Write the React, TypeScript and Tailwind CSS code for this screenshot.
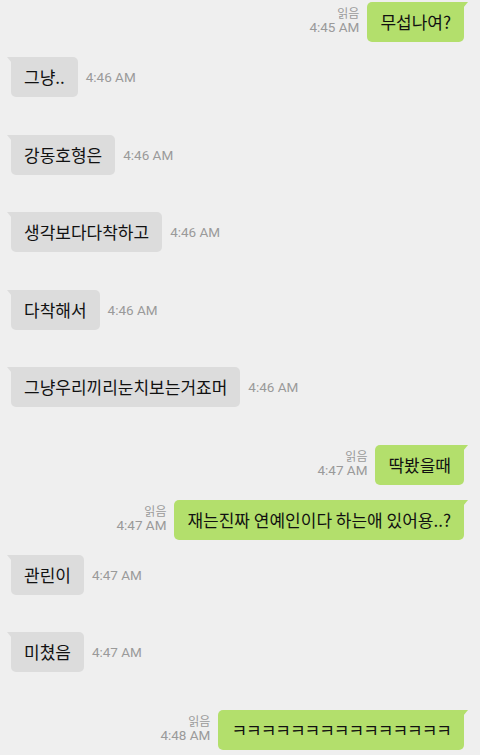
const font = { fontFamily: '"Noto Sans CJK KR", "Noto Sans", sans-serif' };

type Msg = {
  side: "in" | "out";
  text: string;
  time: string;
  gap: string;
  tight?: boolean;
};

const messages: Msg[] = [
  { side: "out", text: "무섭나여?", time: "4:45 AM", gap: "mt-[2px]" },
  { side: "in", text: "그냥..", time: "4:46 AM", gap: "mt-[15px]" },
  { side: "in", text: "강동호형은", time: "4:46 AM", gap: "mt-[38px]" },
  { side: "in", text: "생각보다다착하고", time: "4:46 AM", gap: "mt-[37px]" },
  { side: "in", text: "다착해서", time: "4:46 AM", gap: "mt-[38px]" },
  { side: "in", text: "그냥우리끼리눈치보는거죠머", time: "4:46 AM", gap: "mt-[37px]" },
  { side: "out", text: "딱봤을때", time: "4:47 AM", gap: "mt-[38px]" },
  { side: "out", text: "재는진짜 연예인이다 하는애 있어용..?", time: "4:47 AM", gap: "mt-[15px]" },
  { side: "in", text: "관린이", time: "4:47 AM", gap: "mt-[15px]" },
  { side: "in", text: "미쳤음", time: "4:47 AM", gap: "mt-[37px]" },
  { side: "out", text: "ㅋㅋㅋㅋㅋㅋㅋㅋㅋㅋㅋㅋㅋㅋㅋ", time: "4:48 AM", gap: "mt-[38px]", tight: true },
];

function Incoming({ m }: { m: Msg }) {
  return (
    <div className={`flex items-center pl-[11px] ${m.gap}`}>
      <div className="relative">
        <div className="absolute -left-[4px] top-0 h-0 w-0 border-t-[6px] border-l-[5px] border-t-[#dcdcdc] border-l-transparent" />
        <div
          className="flex h-10 items-center rounded-[5px] rounded-tl-none bg-[#dcdcdc] px-[13px] text-[17px] text-[#111]"
          style={font}
        >
          {m.text}
        </div>
      </div>
      <span className="ml-2 text-[13.5px] text-[#9a9a9a]" style={{ fontFamily: "Roboto, sans-serif" }}>
        {m.time}
      </span>
    </div>
  );
}

function Outgoing({ m }: { m: Msg }) {
  return (
    <div className={`flex items-center justify-end pr-[16px] ${m.gap}`}>
      <div
        className="mr-2 -mt-[3px] flex flex-col items-end text-[13.5px] leading-[15px] text-[#9a9a9a]"
        style={{ fontFamily: "Roboto, sans-serif" }}
      >
        <span className="text-[12px] leading-[14px]" style={font}>읽음</span>
        <span>{m.time}</span>
      </div>
      <div className="relative">
        <div className="absolute -right-[4px] top-0 h-0 w-0 border-t-[6px] border-r-[5px] border-t-[#b3df6c] border-r-transparent" />
        <div
          className={`flex h-10 items-center rounded-[5px] rounded-tr-none bg-[#b3df6c] px-[13px] text-[17px] text-[#111] ${m.tight ? "tracking-[-1px]" : ""}`}
          style={font}
        >
          {m.text}
        </div>
      </div>
    </div>
  );
}

export default function App() {
  return (
    <div className="h-[755px] w-[480px] overflow-hidden bg-[#efefef]">
      {messages.map((m, i) =>
        m.side === "in" ? <Incoming key={i} m={m} /> : <Outgoing key={i} m={m} />
      )}
    </div>
  );
}
